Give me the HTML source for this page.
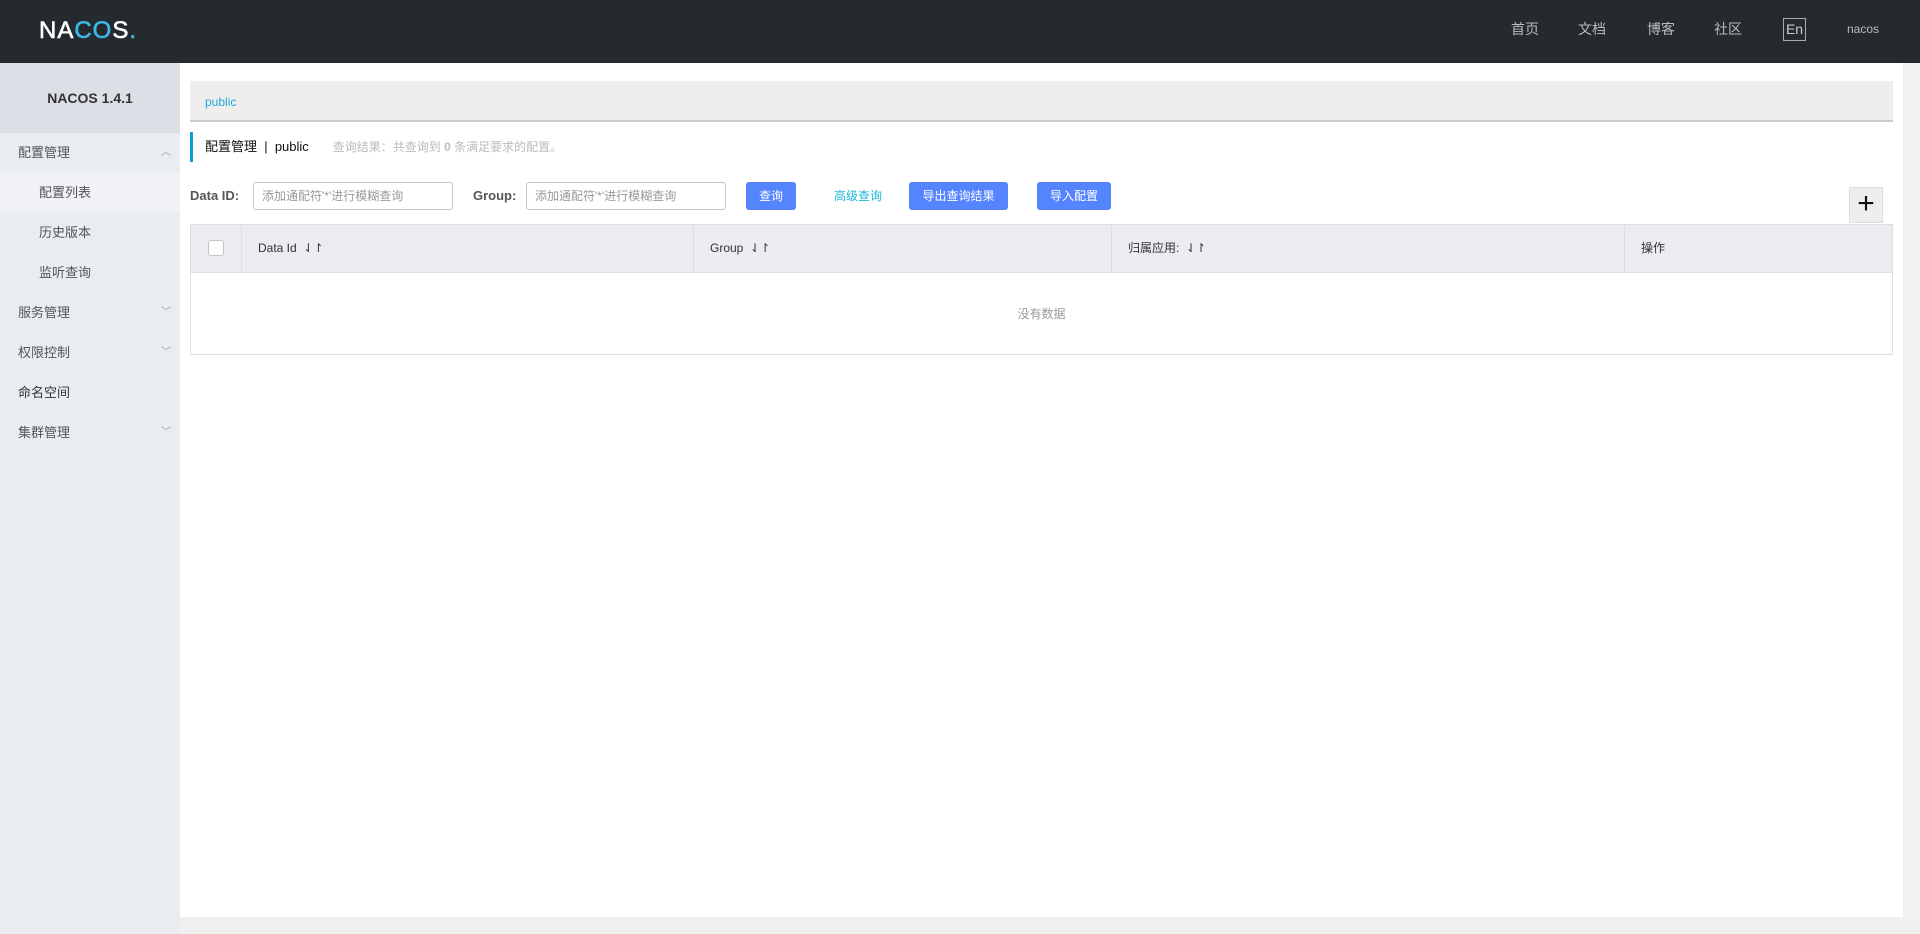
<!DOCTYPE html>
<html><head><meta charset="utf-8">
<style>
*{box-sizing:border-box;margin:0;padding:0}
body{width:1920px;height:934px;overflow:hidden;font-family:"Liberation Sans","Noto Sans CJK SC",sans-serif;font-size:12px;color:#333;background:#fff;position:relative}
.hdr{position:absolute;left:0;top:0;width:1920px;height:63px;background:#252a2f}
.logo{position:absolute;left:39px;top:17px;font-size:24px;font-weight:normal;color:#fff;letter-spacing:1px;-webkit-text-stroke:0.6px #fff}
.logo span{-webkit-text-stroke:0.6px #3bb8e8}
.nav{position:absolute;top:19px;font-size:14px;color:#bbb}
.en{position:absolute;left:1783px;top:18px;width:23px;height:23px;border:1px solid #aaa;color:#ccc;font-size:14px;text-align:center;line-height:20px}
.side{position:absolute;left:0;top:63px;width:180px;height:871px;background:#e9ecf1}
.stitle{height:70px;background:#dcdfe5;text-align:center;line-height:70px;font-weight:bold;font-size:14px;color:#333}
.mi{height:40px;line-height:40px;padding-left:18px;color:#555;font-size:13px;position:relative}
.mi.sub{padding-left:39px}
.mi.sel{background:#f0f2f6}
.chev{position:absolute;left:161px;top:0;color:#999;font-size:10px}
.scr-r{position:absolute;left:1903px;top:63px;width:17px;height:854px;background:#f1f1f1}
.scr-b{position:absolute;left:180px;top:917px;width:1740px;height:17px;background:#f0f0f0}
.crumb{position:absolute;left:190px;top:81px;width:1703px;height:41px;background:#eee;border-bottom:2px solid #ccc}
.crumb span{position:absolute;left:15px;top:14px;color:#1fa8d8;font-size:12px}
.ttl{position:absolute;left:190px;top:132px;height:30px;border-left:3px solid #129ad6;padding-left:12px;line-height:30px;font-size:14px;color:#111}
.ttl i{font-style:normal;color:#bbb;font-size:12px;margin-left:24px}
.lbl{position:absolute;top:188px;font-weight:bold;font-size:13px;color:#555}
.inp{position:absolute;top:182px;width:200px;height:28px;border:1px solid #c4c6cf;border-radius:3px;padding-left:8px;line-height:26px;color:#999;font-size:12px}
.btn{position:absolute;top:182px;height:28px;background:#5584ff;color:#fff;border-radius:3px;text-align:center;line-height:28px;font-size:12px}
.plus{position:absolute;left:1849px;top:187px;width:34px;height:36px;background:#eee;border:1px solid #ddd;font-size:30px;line-height:32px;text-align:center;color:#111;font-weight:300}
.tbl{position:absolute;left:190px;top:224px;width:1703px;height:131px;border:1px solid #dcdee3}
.th{position:absolute;left:0;top:0;width:100%;height:48px;background:#ebecf0;border-bottom:1px solid #dcdee3}
.col{position:absolute;top:0;height:47px;line-height:47px;border-left:1px solid #dcdee3;padding-left:16px;color:#333}
.cb{position:absolute;left:17px;top:15px;width:16px;height:16px;background:#fff;border:1px solid #c4c6cf;border-radius:3px}
.empty{position:absolute;left:0;top:48px;width:100%;height:82px;line-height:82px;text-align:center;color:#999}
</style></head><body>
<div class="hdr">
<div class="logo">NA<span style="color:#3bb8e8">CO</span>S<span style="color:#3bb8e8">.</span></div>
<div class="nav" style="left:1511px">首页</div>
<div class="nav" style="left:1578px">文档</div>
<div class="nav" style="left:1647px">博客</div>
<div class="nav" style="left:1714px">社区</div>
<div class="en">En</div>
<div class="nav" style="left:1847px;font-size:12px;top:22px">nacos</div>
</div>
<div class="side">
<div class="stitle">NACOS 1.4.1</div>
<div class="mi">配置管理<span class="chev">︿</span></div>
<div class="mi sub sel">配置列表</div>
<div class="mi sub">历史版本</div>
<div class="mi sub">监听查询</div>
<div class="mi">服务管理<span class="chev">﹀</span></div>
<div class="mi">权限控制<span class="chev">﹀</span></div>
<div class="mi" style="color:#333">命名空间</div>
<div class="mi">集群管理<span class="chev">﹀</span></div>
</div>
<div class="crumb"><span>public</span></div>
<div class="ttl" style="font-size:13px">配置管理 &nbsp;|&nbsp; public<i>查询结果：共查询到 <b>0</b> 条满足要求的配置。</i></div>
<div class="lbl" style="left:190px">Data ID:</div>
<div class="inp" style="left:253px">添加通配符'*'进行模糊查询</div>
<div class="lbl" style="left:473px">Group:</div>
<div class="inp" style="left:526px">添加通配符'*'进行模糊查询</div>
<div class="btn" style="left:746px;width:50px">查询</div>
<div class="btn" style="left:828px;width:60px;background:none;color:#1fb8d8">高级查询</div>
<div class="btn" style="left:909px;width:99px">导出查询结果</div>
<div class="btn" style="left:1037px;width:74px">导入配置</div>
<div class="plus">+</div>
<div class="tbl">
<div class="th">
<div class="cb"></div>
<div class="col" style="left:50px">Data Id &nbsp;⇃↾</div>
<div class="col" style="left:502px">Group &nbsp;⇃↾</div>
<div class="col" style="left:920px">归属应用: &nbsp;⇃↾</div>
<div class="col" style="left:1433px;border-right:none">操作</div>
</div>
<div class="empty">没有数据</div>
</div>
<div class="scr-r"></div>
<div class="scr-b"></div>
</body></html>
